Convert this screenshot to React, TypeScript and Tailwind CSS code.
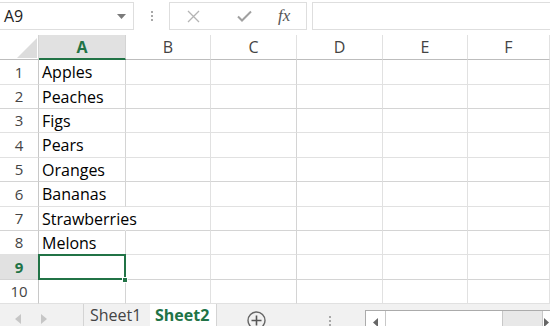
import React from 'react';

const cols = [
  { key: 'A', w: 'w-[87px]' },
  { key: 'B', w: 'w-[85px]' },
  { key: 'C', w: 'w-[86px]' },
  { key: 'D', w: 'w-[86px]' },
  { key: 'E', w: 'w-[85px]' },
  { key: 'F', w: 'flex-1' },
];

const rows = [
  { n: 1, text: 'Apples', h: 'h-[25px]', line: 'border-[#e1e1e1]' },
  { n: 2, text: 'Peaches', h: 'h-[24px]', line: 'border-[#d4d4d4]' },
  { n: 3, text: 'Figs', h: 'h-[24px]', line: 'border-[#e1e1e1]' },
  { n: 4, text: 'Pears', h: 'h-[25px]', line: 'border-[#e1e1e1]' },
  { n: 5, text: 'Oranges', h: 'h-[24px]', line: 'border-[#d4d4d4]' },
  { n: 6, text: 'Bananas', h: 'h-[25px]', line: 'border-[#e1e1e1]' },
  { n: 7, text: 'Strawberries', h: 'h-[24px]', line: 'border-[#d4d4d4]' },
  { n: 8, text: 'Melons', h: 'h-[24px]', line: 'border-[#e1e1e1]' },
  { n: 9, text: '', h: 'h-[25px]', line: 'border-[#d4d4d4]' },
  { n: 10, text: '', h: 'h-[24px]', line: 'border-[#e1e1e1]' },
];

const vline = (key: string) =>
  key === 'A' || key === 'C' ? 'border-r-[#d4d4d4]' : 'border-r-[#e1e1e1]';

function FormulaBar() {
  return (
    <div className="flex h-[35px] items-start pt-[2px] bg-white">
      <div className="relative flex h-[28px] w-[134px] items-center border border-l-0 border-[#dedede] pl-[4px] text-[16px] text-[#222]">
        A9
        <svg className="absolute right-[7px] top-[11px]" width="9" height="5" viewBox="0 0 9 5">
          <path d="M0 0h9L4.5 5z" fill="#7a7a7a" />
        </svg>
      </div>
      <div className="flex h-[28px] w-[35px] items-center justify-center">
        <div className="flex flex-col gap-[2px]">
          <span className="block h-[2px] w-[2px] bg-[#a8a8a8]" />
          <span className="block h-[2px] w-[2px] bg-[#a8a8a8]" />
          <span className="block h-[2px] w-[2px] bg-[#a8a8a8]" />
        </div>
      </div>
      <div className="flex h-[28px] w-[138px] items-center border border-[#dedede]">
        <svg className="ml-[17px]" width="13" height="13" viewBox="0 0 13 13">
          <path d="M1 1l11 11M12 1L1 12" stroke="#b4b4b4" strokeWidth="1.3" />
        </svg>
        <svg className="ml-[37px]" width="15" height="12" viewBox="0 0 15 12">
          <path d="M1 6.5l4 4L14 1.5" stroke="#a0a0a0" strokeWidth="2" fill="none" />
        </svg>
        <span className="ml-[26px] font-['Liberation_Serif',serif] text-[17px] italic text-[#555]">fx</span>
      </div>
      <div className="ml-[5px] h-[28px] flex-1 border border-r-0 border-[#dedede]" />
    </div>
  );
}

function HeaderRow() {
  return (
    <div className="flex h-[25px]">
      <div className="relative w-[39px] border-r border-b border-r-[#d4d4d4] border-b-[#bdbdbd] bg-white">
        <svg className="absolute left-[17px] top-[3px]" width="20" height="20" viewBox="0 0 20 20">
          <path d="M20 0V20H0z" fill="#dcdcdc" />
        </svg>
      </div>
      {cols.map((c) =>
        c.key === 'A' ? (
          <div
            key={c.key}
            className={`${c.w} flex items-center justify-center border-r border-b-2 border-r-[#d4d4d4] border-b-[#217346] bg-[#e1e1e1] text-[16px] font-bold text-[#217346]`}
          >
            A
          </div>
        ) : (
          <div
            key={c.key}
            className={`${c.w} flex items-center justify-center border-r border-b border-r-[#e1e1e1] border-b-[#bdbdbd] bg-white text-[16px] text-[#444]`}
          >
            {c.key}
          </div>
        )
      )}
    </div>
  );
}

function DataRow({ r }: { r: (typeof rows)[number] }) {
  const sel = r.n === 9;
  return (
    <div className={`flex ${r.h}`}>
      <div
        className={`flex w-[39px] items-center justify-center border-r border-b border-r-[#c8c8c8] ${r.line} ${
          sel ? 'bg-[#e1e1e1] font-bold text-[#217346]' : 'bg-white text-[#444]'
        } text-[15px]`}
      >
        {r.n}
      </div>
      {cols.map((c) => {
        const overflow = c.key === 'A' && r.n === 7;
        return (
          <div
            key={c.key}
            className={`${c.w} relative flex items-center border-r border-b ${r.line} ${
              overflow ? 'border-r-transparent' : vline(c.key)
            }`}
          >
            {c.key === 'A' && r.text && (
              <span className="relative z-10 whitespace-nowrap pl-[3px] text-[16px] text-black">{r.text}</span>
            )}
            {c.key === 'A' && sel && (
              <>
                <div className="absolute -left-[1px] -top-[1px] z-20 h-[26px] w-[88px] border-2 border-[#217346]" />
                <div className="absolute -right-[3px] -bottom-[4px] z-30 h-[6px] w-[6px] border border-white bg-[#217346]" />
              </>
            )}
          </div>
        );
      })}
    </div>
  );
}

function TabBar() {
  return (
    <div className="flex h-[22px] items-start bg-[#f1f1f1]">
      <div className="flex h-[22px] w-[84px] items-center border-r border-[#d4d4d4] pt-[8px]">
        <svg className="ml-[15px]" width="6" height="10" viewBox="0 0 6 10">
          <path d="M6 0V10L0 5z" fill="#c6c6c6" />
        </svg>
        <svg className="ml-[20px]" width="6" height="10" viewBox="0 0 6 10">
          <path d="M0 0V10L6 5z" fill="#c6c6c6" />
        </svg>
      </div>
      <div className="h-[22px] w-[66px] pl-[6px] pt-[1px] text-[16px] leading-[20px] text-[#444]">Sheet1</div>
      <div className="h-[22px] w-[67px] border-r border-[#d4d4d4] bg-white pl-[5px] pt-[1px] text-[16px] font-bold leading-[20px] text-[#217346]">
        Sheet2
      </div>
      <div className="flex h-[22px] w-[78px] items-start justify-center overflow-hidden pt-[7px]">
        <svg className="shrink-0" width="19" height="19" viewBox="0 0 19 19">
          <circle cx="9.5" cy="9.5" r="8.5" stroke="#666" strokeWidth="1.4" fill="none" />
          <path d="M9.5 4.5v10M4.5 9.5h10" stroke="#555" strokeWidth="1.6" />
        </svg>
      </div>
      <div className="flex h-[22px] w-[70px] items-start justify-center pt-[12px]">
        <div className="flex flex-col gap-[2px]">
          <span className="block h-[2px] w-[2px] bg-[#a8a8a8]" />
          <span className="block h-[2px] w-[2px] bg-[#a8a8a8]" />
          <span className="block h-[2px] w-[2px] bg-[#a8a8a8]" />
        </div>
      </div>
      <div className="mt-[6px] flex h-[24px] flex-1 border border-r-0 border-[#ababab] bg-white">
        <div className="flex w-[20px] items-center justify-center border-r border-[#c8c8c8]">
          <svg width="5" height="9" viewBox="0 0 5 9">
            <path d="M5 0V9L0 4.5z" fill="#666" />
          </svg>
        </div>
        <div className="w-[117px] border-r border-[#c8c8c8] bg-white" />
        <div className="w-[40px] border-r border-[#c8c8c8] bg-[#e8e8e8]" />
        <div className="flex flex-1 items-center justify-center">
          <svg width="5" height="9" viewBox="0 0 5 9">
            <path d="M0 0V9L5 4.5z" fill="#666" />
          </svg>
        </div>
      </div>
    </div>
  );
}

export default function App() {
  return (
    <div className="h-[326px] w-[550px] overflow-hidden bg-white font-['Open_Sans',sans-serif]">
      <FormulaBar />
      <HeaderRow />
      {rows.map((r) => (
        <DataRow key={r.n} r={r} />
      ))}
      <TabBar />
    </div>
  );
}
